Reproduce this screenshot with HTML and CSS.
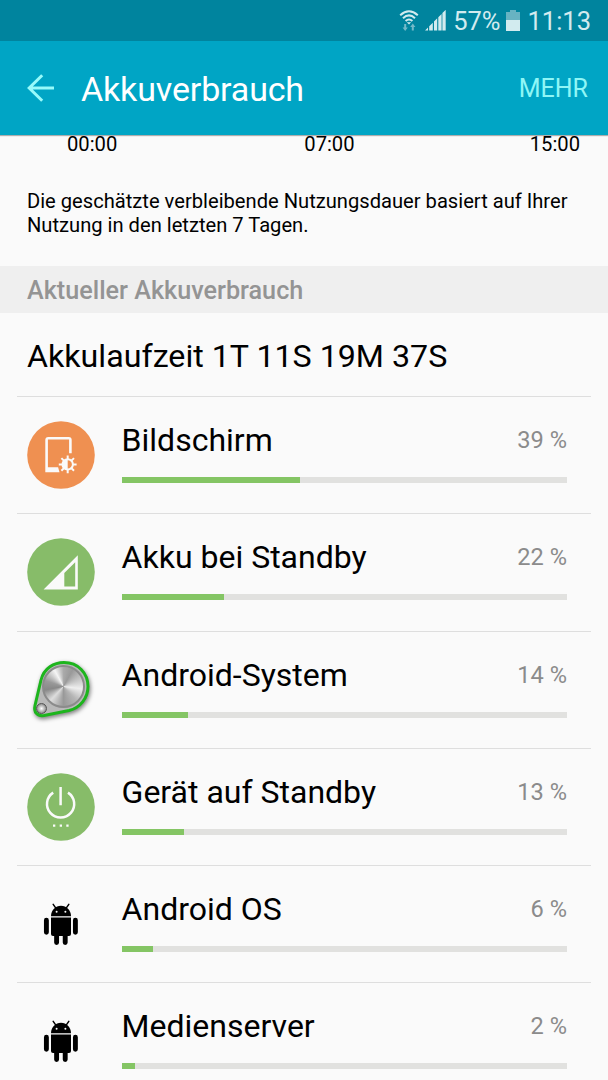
FILE: index.html
```
<!DOCTYPE html>
<html lang="de">
<head>
    <meta charset="UTF-8">
    <meta name="viewport" content="width=device-width, initial-scale=1.0">
    <title>Akkuverbrauch</title>
    <link rel="stylesheet" href="styles.css">
</head>
<body>
    <div class="statusbar">
        <svg class="wifi" width="20" height="22" viewBox="0 0 20 22">
            <g fill="none" stroke="#d2ebef" stroke-width="2">
                <path d="M1.2 5.2Q10 -2.6 18.8 5.2"/>
                <path d="M4 8.2Q10 2.6 16 8.2"/>
                <path d="M6.6 11Q10 8 13.4 11"/>
            </g>
            <path d="M7.8 12.2h4.4L10 14.6z" fill="#d2ebef"/>
            <path d="M5.2 14h2v3.6h1.6L6.2 21 3.6 17.6h1.6zM12.8 20.5h2v-3.6h1.6l-2.6-3.4-2.6 3.4h1.6z" fill="#74b9c8"/>
        </svg>
        <svg class="signal" width="21" height="21" viewBox="0 0 21 21">
            <path d="M0 20.5L3 17.5v3zM4.2 16.3l3.6-3.6v7.8H4.2zM9 11.5l3.2-3.2v12.200H9zM13.300 7.200l3.300-3.300v16.600h-3.300zM17.400 3.100l3.300-3.300v20.700h-3.300z" fill="#d2ebef"/>
        </svg>
        <span class="percent">57%</span>
        <svg class="battery" width="14" height="21" viewBox="0 0 14 21">
            <path d="M4 0h6v2h4v19H0V2h4z" fill="#68b3c2"/>
            <path d="M0 10h14v11H0z" fill="#d2ebef"/>
        </svg>
        <span class="clock">11:13</span>
    </div>
    <header class="appbar">
        <svg class="back" width="28" height="28" viewBox="0 0 28 28">
            <path d="M15.2 1.2L2.2 14l13 12.8M2.2 14H27" fill="none" stroke="#98fafa" stroke-width="3"/>
        </svg>
        <h1>Akkuverbrauch</h1>
        <span class="more">MEHR</span>
    </header>
    <main>
        <div class="times">
            <span>00:00</span>
            <span class="mid">07:00</span>
            <span>15:00</span>
        </div>
        <p class="hint">Die geschätzte verbleibende Nutzungsdauer basiert auf Ihrer<br>Nutzung in den letzten 7 Tagen.</p>
        <h2>Aktueller Akkuverbrauch</h2>
        <div class="runtime">Akkulaufzeit 1T 11S 19M 37S</div>
        <ul class="usage">
            <li>
                <svg class="icon" viewBox="0 0 68 68">
                    <circle cx="34" cy="34" r="33.8" fill="#ef9051"/>
                    <path d="M18.3 51.3V19q0-3 3-3h20.4q3 0 3 3v13.2h-2.6V18.6H20.9v27.7h10.2l1.4 5z" fill="#fafafa"/>
                    <g stroke="#fafafa" stroke-width="2">
                        <path d="M40.7 34.5v17.8M31.8 43.4h17.8M34.4 37.1L47 49.7M47 37.1L34.4 49.7"/>
                        <circle cx="40.7" cy="43.4" r="5.2" fill="#ef9051"/>
                    </g>
                    <path d="M40.7 38.2a5.2 5.2 0 0 0 0 10.4z" fill="#fafafa"/>
                </svg>
                <div class="info">
                    <div class="label"><span class="name">Bildschirm</span><span class="value">39 %</span></div>
                    <div class="bar"><div class="fill" style="width: 40%"></div></div>
                </div>
            </li>
            <li>
                <svg class="icon" viewBox="0 0 68 68">
                    <circle cx="34" cy="34" r="33.8" fill="#87bc69"/>
                    <path d="M50.8 17.2v34.2H16.6zM48.2 24.2L37.3 35.1v13.4h10.9z" fill="#fafafa" fill-rule="evenodd"/>
                </svg>
                <div class="info">
                    <div class="label"><span class="name">Akku bei Standby</span><span class="value">22 %</span></div>
                    <div class="bar"><div class="fill" style="width: 23%"></div></div>
                </div>
            </li>
            <li>
                <div class="icon locket">
                    <svg viewBox="0 0 68 68">
                        <path class="case" d="M14 24C17 12 27 6.5 37 6.5C51 6.5 61 17 61 30.5C61 42 53 52 42 54.5L17 59.500C10 60.500 6.500 56 8 49.500Z"/>
                    </svg>
                    <div class="disc"></div>
                    <div class="knob"></div>
                </div>
                <div class="info">
                    <div class="label"><span class="name">Android-System</span><span class="value">14 %</span></div>
                    <div class="bar"><div class="fill" style="width: 15%"></div></div>
                </div>
            </li>
            <li>
                <svg class="icon" viewBox="0 0 68 68">
                    <circle cx="34" cy="34" r="33.8" fill="#87bc69"/>
                    <path d="M26.2 19.6a13.6 13.6 0 1 0 14.8 0M33.6 14v18.3" fill="none" stroke="#fafafa" stroke-width="2.5"/>
                    <path d="M26 51.5h2.3v2.3H26zM32.7 51.5H35v2.3h-2.3zM39.3 51.5h2.3v2.3h-2.3z" fill="#fafafa"/>
                </svg>
                <div class="info">
                    <div class="label"><span class="name">Gerät auf Standby</span><span class="value">13 %</span></div>
                    <div class="bar"><div class="fill" style="width: 14%"></div></div>
                </div>
            </li>
            <li>
                <svg class="icon" viewBox="0 0 68 68">
                    <path d="M24 26.2C24 20 28.6 15.8 34 15.8S44 20 44 26.2z"/>
                    <path d="M26.200 14.400l2.800 4M41.800 14.400L39 18.400" stroke="#000" stroke-width="1.5" stroke-linecap="round"/>
                    <path d="M24 27.5h20v16.600a2 2 0 0 1-2 2H26a2 2 0 0 1-2-2z"/>
                    <path d="M19.4 30.200v12M48.4 30.200v12M29.600 43v9.600M38.200 43v9.600" stroke="#000" stroke-width="4.9" stroke-linecap="round"/>
                    <circle cx="29.6" cy="21.8" r="1" fill="#fafafa"/>
                    <circle cx="38.4" cy="21.8" r="1" fill="#fafafa"/>
                </svg>
                <div class="info">
                    <div class="label"><span class="name">Android OS</span><span class="value">6 %</span></div>
                    <div class="bar"><div class="fill" style="width: 7%"></div></div>
                </div>
            </li>
            <li>
                <svg class="icon" viewBox="0 0 68 68">
                    <path d="M24 26.2C24 20 28.6 15.8 34 15.8S44 20 44 26.2z"/>
                    <path d="M26.2 14.4l2.8 4M41.8 14.4L39 18.4" stroke="#000" stroke-width="1.5" stroke-linecap="round"/>
                    <path d="M24 27.5h20v16.6a2 2 0 0 1-2 2H26a2 2 0 0 1-2-2z"/>
                    <path d="M19.4 30.2v12M48.4 30.2v12M29.6 43v9.6M38.2 43v9.6" stroke="#000" stroke-width="4.9" stroke-linecap="round"/>
                    <circle cx="29.6" cy="21.8" r="1" fill="#fafafa"/>
                    <circle cx="38.4" cy="21.8" r="1" fill="#fafafa"/>
                </svg>
                <div class="info">
                    <div class="label"><span class="name">Medienserver</span><span class="value">2 %</span></div>
                    <div class="bar"><div class="fill" style="width: 3%"></div></div>
                </div>
            </li>
        </ul>
    </main>
</body>
</html>
```
FILE: styles.css
```
* {
    box-sizing: border-box;
}
body {
    margin: 0;
    height: 1080px;
    overflow: hidden;
    display: flex;
    flex-direction: column;
    background: #fafafa;
    color: #000;
    font-family: Roboto, "Liberation Sans", sans-serif;
}
h1, h2, p, ul {
    margin: 0;
    padding: 0;
    font-weight: 400;
}
.statusbar {
    flex: none;
    height: 41px;
    display: flex;
    justify-content: flex-end;
    align-items: center;
    padding-right: 17px;
    background: #00849e;
    color: #d2ebef;
    font-size: 25.5px;
}
.signal {
    margin: 0 7px 0 6px;
}
.battery {
    margin: 0 7px 0 6px;
}
.appbar {
    flex: none;
    height: 94px;
    display: flex;
    align-items: center;
    padding: 0 20px 0 27px;
    background: #00a5c5;
    position: relative;
    z-index: 1;
    box-shadow: 0 1px 1px rgba(0, 0, 0, 0.3);
}
.appbar h1 {
    flex: 1;
    margin-left: 26px;
    padding-top: 1px;
    color: #fff;
    font-size: 34px;
    letter-spacing: -0.15px;
}
.more {
    padding-top: 1px;
    color: #8ff6f6;
    font-size: 25px;
}
main {
    flex: 1;
    min-height: 0;
}
.times {
    display: flex;
    height: 54px;
    padding: 0 28px 0 67px;
    font-size: 20.2px;
    line-height: 19px;
}
.times .mid {
    flex: 1;
    padding-left: 187px;
}
.hint {
    height: 77px;
    padding-left: 27px;
    font-size: 20.15px;
    line-height: 24px;
    white-space: nowrap;
}
h2 {
    height: 47px;
    padding-left: 27px;
    background: #efefef;
    color: #949494;
    font-size: 25.2px;
    font-weight: 500;
    line-height: 49px;
}
.runtime {
    height: 83px;
    padding-left: 27px;
    font-size: 32.2px;
    line-height: 86px;
}
.usage {
    list-style: none;
    margin: 0 17px;
}
.usage li {
    height: 117.3px;
    display: flex;
    padding: 24px 24px 0 10px;
    border-top: 1px solid #dedede;
}
.icon {
    flex: none;
    width: 68px;
    height: 68px;
    margin-right: 26.6px;
}
.info {
    flex: 1;
    padding-top: 1px;
}
.label {
    display: flex;
    justify-content: space-between;
    height: 55px;
    line-height: 37px;
}
.name {
    font-size: 32px;
}
.value {
    color: #8b8b8b;
    font-size: 23.6px;
}
.bar {
    height: 6px;
    background: #e1e1df;
}
.fill {
    height: 6px;
    background: #84c564;
}

/* round metal badge with its small knob */
.locket {
    position: relative;
}
.locket svg {
    display: block;
    filter: drop-shadow(1px 2px 2px rgba(0, 0, 0, 0.5));
}
.case {
    fill: #b9b9b9;
    stroke: #1db51d;
    stroke-width: 3;
}
.disc, .knob {
    position: absolute;
    border-radius: 50%;
}
.disc {
    left: 15px;
    top: 9px;
    width: 43px;
    height: 43px;
    border: 2px solid #8b8b8b;
    background: conic-gradient(#aaa, #999 8%, #c5c5c5 18%, #eee 27%, #b5b5b5 38%, #999 50%, #ddd 62%, #888 72%, #999 80%, #f5f5f5 92%, #aaa);
}
.knob {
    left: 9px;
    top: 47px;
    width: 11px;
    height: 11px;
    border: 1px solid #555;
    background: radial-gradient(#fff, #666);
}
```
